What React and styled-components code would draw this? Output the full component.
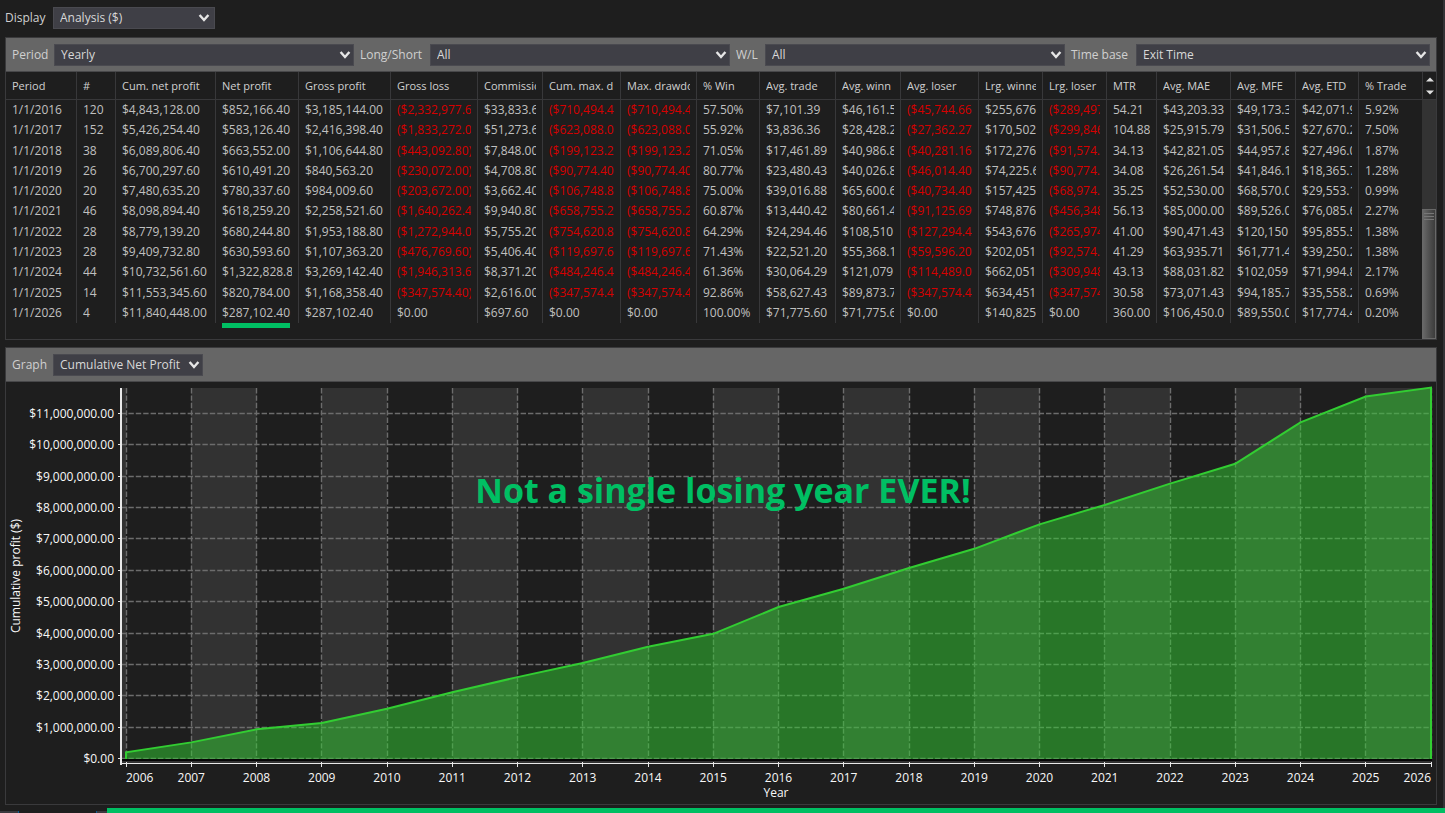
import React from "react";
import styled, { createGlobalStyle, css } from "styled-components";

const GlobalStyle = createGlobalStyle`
  *, *::before, *::after { box-sizing: border-box; }
  body {
    margin: 0;
    background: #1e1e1e;
    color: #d0d0d0;
    font-family: "Open Sans", "Noto Sans", sans-serif;
    font-size: 12px;
  }
`;

const Window = styled.div`
  display: flex;
  flex-direction: column;
  min-height: 100vh;
  border-right: 2px solid #333336;
`;

const Content = styled.main`
  flex: 1;
  padding: 7px 6px 3px 5px;
`;

const DisplayRow = styled.div`
  display: grid;
  grid-template-columns: 48px 162px;
  align-items: center;
  margin-bottom: 8px;
`;

const Panel = styled.section`
  border: 1px solid #3a3a3c;
  & + & { margin-top: 7px; }
`;

const Bar = styled.div`
  display: grid;
  grid-template-columns: ${(p) => p.$columns};
  align-items: center;
  height: 34px;
  padding: 0 6px;
  background: #666666;
  border-bottom: 1px solid #48484a;
`;

const Label = styled.label`
  line-height: 22px;
  white-space: nowrap;
  padding-left: ${(p) => p.$inset || 0}px;
`;

const SelectBox = styled.div`
  position: relative;
  height: 22px;
`;

const Select = styled.select`
  appearance: none;
  display: block;
  width: 100%;
  height: 22px;
  margin: 0;
  padding: 0 6px;
  border: 1px solid #4a4a50;
  border-radius: 0;
  background: #3f3f46;
  color: #d8d8d8;
  font: inherit;
  line-height: 20px;
`;

const Chevron = styled.svg`
  position: absolute;
  right: ${(p) => p.$inset}px;
  top: 6px;
  width: 12px;
  height: 10px;
  pointer-events: none;
`;

function Dropdown({ id, value, arrowInset = 3 }) {
  return (
    <SelectBox>
      <Select id={id} defaultValue={value}>
        <option>{value}</option>
      </Select>
      <Chevron $inset={arrowInset} viewBox="0 0 12 10" aria-hidden="true">
        <path d="M1.6 2 L6 7 L10.4 2" fill="none" stroke="#e6e6e6" strokeWidth="2.4" />
      </Chevron>
    </SelectBox>
  );
}

const GridArea = styled.div`
  display: flex;
  height: 267px;
`;

const TableWrap = styled.div`
  flex: 1;
  min-width: 0;
`;

const Table = styled.table`
  width: 100%;
  height: 251px;
  table-layout: fixed;
  border-collapse: separate;
  border-spacing: 0;
  font-size: 12px;
  line-height: 16px;
`;

const cell = css`
  padding: 0 6px;
  border-right: 1px solid #38383a;
  text-align: left;
  font-weight: 400;
  &:last-child { border-right: 0; }
`;

const Th = styled.th`
  ${cell}
  height: 28px;
  border-bottom: 1px solid #38383a;
  font-size: 11px;
`;

const Td = styled.td`
  ${cell}
  color: ${(p) => (p.$loss ? "#d60000" : "#c0c0c0")};
`;

const Clip = styled.div`
  position: relative;
  overflow: ${(p) => (p.$marked ? "visible" : "hidden")};
  white-space: nowrap;
`;

const Underline = styled.span`
  position: absolute;
  left: 0;
  top: 18px;
  width: 68px;
  height: 5px;
  background: #00bf63;
`;

const ScrollBar = styled.div`
  flex: none;
  display: flex;
  flex-direction: column;
  width: 14px;
`;

const ScrollButtons = styled.div`
  display: flex;
  flex-direction: column;
  justify-content: center;
  gap: 8px;
  align-items: center;
  height: 28px;
  border-left: 1px solid #38383a;
  border-bottom: 1px solid #38383a;
`;

const ScrollButton = styled.button`
  display: flex;
  padding: 0;
  border: 0;
  background: none;
`;

const Track = styled.div`
  flex: 1;
  display: flex;
  flex-direction: column;
  justify-content: flex-end;
  background: #333333;
`;

const Thumb = styled.div`
  height: 130px;
  padding: 3px 1px;
  border: 1px solid #686868;
  background: linear-gradient(90deg, #686868, #4c4c4c 60%, #3c3c3c);
`;

const Grip = styled.div`
  height: 7px;
  border: solid #777777;
  border-width: 1px 0;
  display: flex;
  align-items: center;
  &::after { content: ""; flex: 1; height: 1px; background: #777777; }
`;

const Chart = styled.svg`
  display: block;
  width: 100%;
  height: auto;
`;

const AxisText = styled.text`
  fill: #f8f8f8;
  font-size: 12px;
`;

const Slogan = styled.text`
  fill: #00bf63;
  font-size: 34px;
  font-weight: 700;
`;

const Footer = styled.footer`
  display: flex;
  height: 5px;
  margin-right: -2px;
`;

const TaskStrip = styled.div`
  width: 107px;
  display: flex;
  justify-content: space-between;
  align-items: flex-end;
`;

const TaskItem = styled.div`
  width: ${(p) => p.$width}px;
  height: 2px;
  background: #3a3a3e;
  border: solid #0b5c94;
  border-width: ${(p) => (p.$end ? "0 0 0 1px" : "0 1px 0 0")};
`;

const Accent = styled.div`
  flex: 1;
  background: #00bf63;
`;

const columns = [
  ["Period", 71], ["#", 39], ["Cum. net profit", 100], ["Net profit", 83],
  ["Gross profit", 92], ["Gross loss", 87], ["Commissio", 65], ["Cum. max. d", 78],
  ["Max. drawdo", 76], ["% Win", 63], ["Avg. trade", 76], ["Avg. winn", 65],
  ["Avg. loser", 78], ["Lrg. winner", 64], ["Lrg. loser", 64], ["MTR", 50],
  ["Avg. MAE", 74], ["Avg. MFE", 65], ["Avg. ETD", 63], ["% Trade", 63],
];

const rows = `1/1/2016|120|$4,843,128.00|$852,166.40|$3,185,144.00|($2,332,977.6|$33,833.6|($710,494.4|($710,494.4|57.50%|$7,101.39|$46,161.5|($45,744.66)|$255,676|($289,497|54.21|$43,203.33|$49,173.3|$42,071.9|5.92%
1/1/2017|152|$5,426,254.40|$583,126.40|$2,416,398.40|($1,833,272.0|$51,273.6|($623,088.0|($623,088.0|55.92%|$3,836.36|$28,428.2|($27,362.27)|$170,502|($299,846|104.88|$25,915.79|$31,506.5|$27,670.2|7.50%
1/1/2018|38|$6,089,806.40|$663,552.00|$1,106,644.80|($443,092.80)|$7,848.00|($199,123.2|($199,123.2|71.05%|$17,461.89|$40,986.8|($40,281.16)|$172,276|($91,574.|34.13|$42,821.05|$44,957.8|$27,496.0|1.87%
1/1/2019|26|$6,700,297.60|$610,491.20|$840,563.20|($230,072.00)|$4,708.80|($90,774.40|($90,774.40|80.77%|$23,480.43|$40,026.8|($46,014.40)|$74,225.6|($90,774.|34.08|$26,261.54|$41,846.1|$18,365.7|1.28%
1/1/2020|20|$7,480,635.20|$780,337.60|$984,009.60|($203,672.00)|$3,662.40|($106,748.8|($106,748.8|75.00%|$39,016.88|$65,600.6|($40,734.40)|$157,425|($68,974.|35.25|$52,530.00|$68,570.0|$29,553.1|0.99%
1/1/2021|46|$8,098,894.40|$618,259.20|$2,258,521.60|($1,640,262.4|$9,940.80|($658,755.2|($658,755.2|60.87%|$13,440.42|$80,661.4|($91,125.69)|$748,876|($456,348|56.13|$85,000.00|$89,526.0|$76,085.6|2.27%
1/1/2022|28|$8,779,139.20|$680,244.80|$1,953,188.80|($1,272,944.0|$5,755.20|($754,620.8|($754,620.8|64.29%|$24,294.46|$108,510|($127,294.40|$543,676|($265,974|41.00|$90,471.43|$120,150|$95,855.5|1.38%
1/1/2023|28|$9,409,732.80|$630,593.60|$1,107,363.20|($476,769.60)|$5,406.40|($119,697.6|($119,697.6|71.43%|$22,521.20|$55,368.1|($59,596.20)|$202,051|($92,574.|41.29|$63,935.71|$61,771.4|$39,250.2|1.38%
1/1/2024|44|$10,732,561.60|$1,322,828.8|$3,269,142.40|($1,946,313.6|$8,371.20|($484,246.4|($484,246.4|61.36%|$30,064.29|$121,079|($114,489.04|$662,051|($309,948|43.13|$88,031.82|$102,059|$71,994.8|2.17%
1/1/2025|14|$11,553,345.60|$820,784.00|$1,168,358.40|($347,574.40)|$2,616.00|($347,574.4|($347,574.4|92.86%|$58,627.43|$89,873.7|($347,574.40|$634,451|($347,574|30.58|$73,071.43|$94,185.7|$35,558.2|0.69%
1/1/2026|4|$11,840,448.00|$287,102.40|$287,102.40|$0.00|$697.60|$0.00|$0.00|100.00%|$71,775.60|$71,775.6|$0.00|$140,825|$0.00|360.00|$106,450.0|$89,550.0|$17,774.4|0.20%`
  .split("\n")
  .map((line) => line.split("|"));

const profit = [
  0.215, 0.53, 0.945, 1.15, 1.6, 2.13, 2.61, 3.06, 3.58, 3.99, 4.843128,
  5.426254, 6.089806, 6.700298, 7.480635, 8.098894, 8.779139, 9.409733,
  10.732562, 11.553346, 11.840448,
];

const plot = { left: 115, top: 6, right: 1426, base: 377 };
const xOf = (i) => 120 + i * 65.25;
const yOf = (v) => plot.base - v * 31.37;

function ProfitChart() {
  const line = profit.map((v, i) => `${xOf(i)},${yOf(v)}`).join(" L");
  const outline = `M${xOf(0)},${plot.base} L${line} L${xOf(20)},${plot.base}`;
  return (
    <Chart viewBox="0 0 1430 422" role="img" aria-label="Cumulative Net Profit">
      <rect x={plot.left} y={plot.top} width="5" height={plot.base - plot.top} fill="#323232" />
      {profit.map((_, i) =>
        i % 2 === 1 && i < 20 ? (
          <rect key={i} x={xOf(i)} y={plot.top} width="65.25" height={plot.base - plot.top} fill="#323232" />
        ) : null
      )}
      <g stroke="#6c6c6c" strokeWidth="1.4" strokeDasharray="5.4 2">
        {profit.map((_, i) => (
          <line key={i} x1={Math.floor(xOf(i)) + 0.5} x2={Math.floor(xOf(i)) + 0.5} y1={plot.top} y2={plot.base} />
        ))}
        {Array.from({ length: 12 }, (_, i) => (
          <line key={i} x1={plot.left} x2={plot.right} y1={Math.round(yOf(i)) - 0.5} y2={Math.round(yOf(i)) - 0.5} />
        ))}
      </g>
      <path d={`${outline} Z`} fill="#32cd32" fillOpacity="0.5" />
      <path d={outline} fill="none" stroke="#32cd32" strokeWidth="2" />
      <rect x={plot.left} y={plot.base} width={plot.right - plot.left} height="2" fill="#050505" />
      <rect x={plot.left} y={plot.base + 2} width={plot.right - plot.left} height="2" fill="#323232" />
      <g fill="#e8e8e8">
        <rect x="114" y={plot.top} width="2" height="377" />
        <rect x="114" y="381" width="1312" height="1" />
        {profit.map((_, i) => (
          <rect key={i} x={Math.floor(xOf(i))} y="380" width="1" height="5" />
        ))}
        {Array.from({ length: 12 }, (_, i) => (
          <rect key={i} x="112" y={Math.round(yOf(i)) - 1} width="3" height="1" />
        ))}
      </g>
      {Array.from({ length: 12 }, (_, i) => (
        <AxisText key={i} x="108" y={yOf(i) + 4} textAnchor="end">
          {`$${i ? `${i},000,000` : "0"}.00`}
        </AxisText>
      ))}
      {profit.map((_, i) => (
        <AxisText
          key={i}
          x={xOf(i)}
          y="400"
          textAnchor={i === 0 ? "start" : i === 20 ? "end" : "middle"}
        >
          {2006 + i}
        </AxisText>
      ))}
      <AxisText x="770" y="415" textAnchor="middle">Year</AxisText>
      <AxisText transform="translate(14 194) rotate(-90)" textAnchor="middle">
        Cumulative profit ($)
      </AxisText>
      <Slogan x="717" y="121" textAnchor="middle">Not a single losing year EVER!</Slogan>
    </Chart>
  );
}

function Arrow({ down }) {
  return (
    <svg width="8" height="5" viewBox="0 0 8 5" aria-hidden="true">
      <path d={down ? "M0 0.5H8L4 4.5Z" : "M0 4.5H8L4 0.5Z"} fill="#e0e0e0" />
    </svg>
  );
}

export default function App() {
  return (
    <>
      <GlobalStyle />
      <Window>
        <Content>
          <DisplayRow>
            <Label htmlFor="display">Display</Label>
            <Dropdown id="display" value="Analysis ($)" arrowInset={5} />
          </DisplayRow>
          <Panel>
            <Bar $columns="42px 300fr 76px 300fr 35px 300fr 71px 294fr">
              <Label htmlFor="period">Period</Label>
              <Dropdown id="period" value="Yearly" />
              <Label htmlFor="side" $inset={6}>Long/Short</Label>
              <Dropdown id="side" value="All" />
              <Label htmlFor="result" $inset={6}>W/L</Label>
              <Dropdown id="result" value="All" />
              <Label htmlFor="timebase" $inset={6}>Time base</Label>
              <Dropdown id="timebase" value="Exit Time" />
            </Bar>
            <GridArea>
              <TableWrap>
                <Table>
                  <colgroup>
                    {columns.map(([name, width]) => (
                      <col key={name} width={width} />
                    ))}
                  </colgroup>
                  <thead>
                    <tr>
                      {columns.map(([name]) => (
                        <Th key={name} scope="col"><Clip>{name}</Clip></Th>
                      ))}
                    </tr>
                  </thead>
                  <tbody>
                    {rows.map((row, r) => (
                      <tr key={row[0]}>
                        {row.map((value, c) => {
                          const marked = r === rows.length - 1 && c === 3;
                          return (
                            <Td key={c} $loss={value.startsWith("(")}>
                              <Clip $marked={marked}>
                                {value}
                                {marked && <Underline />}
                              </Clip>
                            </Td>
                          );
                        })}
                      </tr>
                    ))}
                  </tbody>
                </Table>
              </TableWrap>
              <ScrollBar>
                <ScrollButtons>
                  <ScrollButton aria-label="Scroll up"><Arrow /></ScrollButton>
                  <ScrollButton aria-label="Scroll down"><Arrow down /></ScrollButton>
                </ScrollButtons>
                <Track>
                  <Thumb><Grip /></Thumb>
                </Track>
              </ScrollBar>
            </GridArea>
          </Panel>
          <Panel>
            <Bar $columns="41px 150px">
              <Label htmlFor="graph">Graph</Label>
              <Dropdown id="graph" value="Cumulative Net Profit" />
            </Bar>
            <ProfitChart />
          </Panel>
        </Content>
        <Footer>
          <TaskStrip>
            <TaskItem $width={19} />
            <TaskItem $width={11} $end />
          </TaskStrip>
          <Accent />
        </Footer>
      </Window>
    </>
  );
}
